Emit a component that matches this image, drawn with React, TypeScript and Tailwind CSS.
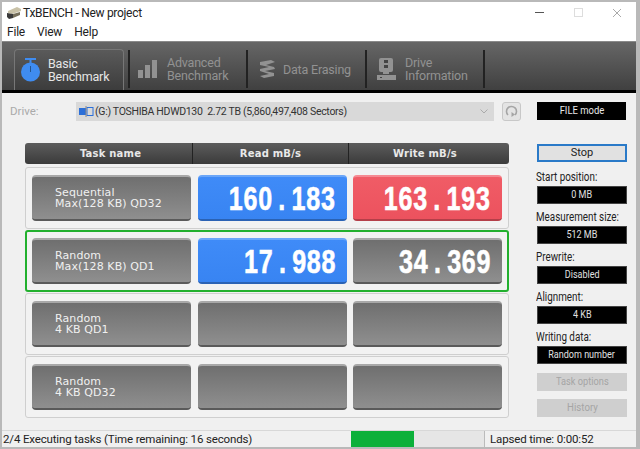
import React from "react";

const sans = "font-['Roboto','Liberation_Sans',sans-serif]";

function Value({ v, tone = "gray", extra = "" }: { v?: string; tone?: "gray" | "blue" | "red"; extra?: string }) {
  const bg =
    tone === "blue"
      ? "bg-[linear-gradient(#3f8bf8,#3884f2)] border-b-[#2a62b4] border-t-[#6ba6f8]"
      : tone === "red"
        ? "bg-[linear-gradient(#f05c66,#ec525e)] border-b-[#b43f49] border-t-[#f58a92]"
        : "bg-[linear-gradient(#6f6f6f,#8f8f8f)] border-b-[#5a5a5a] border-t-[#a8a8a8]";
  return (
    <div className={`h-[46px] rounded-[4px] border-t-2 border-b-2 ${bg} ${extra} flex items-center justify-end pr-[11px]`}>
      {v && (
        <span className="text-white font-['Liberation_Sans',sans-serif] font-bold text-[33px] leading-none tracking-[1px] [word-spacing:-3px] [-webkit-text-stroke:0.6px_white] scale-x-[0.76] origin-right whitespace-pre">
          {v}
        </span>
      )}
    </div>
  );
}

function Row({ a, b, read, write, rt, wt, active }: { a: string; b: string; read?: string; write?: string; rt?: "blue"; wt?: "red"; active?: boolean }) {
  return (
    <div
      className={`h-[62px] rounded-[3px] ${active ? "border-[#22b02e] border-[2px] px-[5px]" : "border border-[#cfcfcf] px-[6px]"} grid grid-cols-[159px_149px_148px] gap-x-[7px] items-center bg-[#f2f2f2]`}
    >
      <div className="h-[46px] rounded-[4px] border-t-2 border-b-2 border-t-[#a8a8a8] border-b-[#5a5a5a] bg-[linear-gradient(#6f6f6f,#8f8f8f)] pl-[23px] flex flex-col justify-center">
        <div className="text-[#f0f0f0] font-['DejaVu_Sans',sans-serif] text-[11px] leading-[11px] tracking-[0.1px]">{a}</div>
        <div className="text-[#f0f0f0] font-['DejaVu_Sans',sans-serif] text-[11px] leading-[11px] tracking-[0.1px]">{b}</div>
      </div>
      <Value v={read} tone={rt ?? "gray"} />
      <Value v={write} tone={wt ?? "gray"} extra="-ml-[1px]" />
    </div>
  );
}

function Tab({ icon, l1, l2, w }: { icon: React.ReactNode; l1: string; l2?: string; w: string }) {
  return (
    <div className={`${w} h-full flex items-center gap-[9px] pl-[8px] pb-[1px]`}>
      {icon}
      <div className="text-[12.5px] tracking-[-0.2px] leading-[13px] text-[#929292]">
        <div>{l1}</div>
        {l2 && <div>{l2}</div>}
      </div>
    </div>
  );
}

function Narrow({ children, s = "scale-x-[0.82]" }: { children: React.ReactNode; s?: string }) {
  return <span className={`inline-block whitespace-nowrap ${s}`}>{children}</span>;
}

function Info({ label, value }: { label: string; value: string }) {
  return (
    <div>
      <div className="text-[12px] leading-[16px] h-[22px] pt-[5px] text-[#222] -ml-[1px] whitespace-nowrap scale-x-[0.82] origin-left">{label}</div>
      <div className="h-[18px] bg-black border border-[#444] text-[#e0e0e0] text-[11px] leading-[16px] flex justify-center overflow-hidden">
        <Narrow>{value}</Narrow>
      </div>
    </div>
  );
}

export default function App() {
  return (
    <div className={`w-[640px] h-[449px] overflow-hidden bg-[#b9b9b9] pt-[2px] pl-[2px] pr-[4px] ${sans}`}>
      <div className="h-[445px] bg-[#f0f0f0] flex flex-col overflow-hidden">
        {/* title */}
        <div className="h-[21px] bg-white flex items-center relative shrink-0">
          <svg width="16" height="14" viewBox="0 0 16 14" className="ml-[4px]">
            <path d="M2 5 L11 1 L15 3 L15 5 L6 8 L2 7Z" fill="#c9c2a8" />
            <path d="M1 7 L7 8 L7 12 L3 13 L1 11Z" fill="#3a3a3a" />
            <path d="M7 8 L14 6 L14 9 L7 12Z" fill="#77705c" />
          </svg>
          <span className="ml-[1px] text-[12px] tracking-[-0.3px] leading-none text-[#222]">TxBENCH - New project</span>
          <div className="ml-auto flex items-center text-[#777]">
            <div className="w-[9px] h-[1px] bg-[#555] mr-[30px]" />
            <div className="w-[9px] h-[9px] border border-[#ddd] mr-[29px]" />
            <svg width="10" height="10" viewBox="0 0 10 10" className="mr-[14px]">
              <path d="M1 1 L9 9 M9 1 L1 9" stroke="#aaa" strokeWidth="1" />
            </svg>
          </div>
        </div>
        {/* menu */}
        <div className="h-[18px] bg-white flex items-center gap-[12px] pl-[5px] text-[12px] tracking-[-0.2px] text-[#222] shrink-0">
          <span>File</span>
          <span>View</span>
          <span>Help</span>
        </div>
        {/* toolbar */}
        <div className="h-[52px] shrink-0 border-t border-[#8a8a8a] border-b-[3px] border-b-black bg-[linear-gradient(#666666,#404040)] flex items-stretch pl-[12px] pt-[7px]">
          <div className="w-[110px] h-[41px] rounded-t-[4px] bg-[linear-gradient(#5a5a5a,#3c3c3c)] border-t border-x border-[#777] flex items-center pl-[6px] gap-[8px]">
            <svg width="19" height="24" viewBox="0 0 19 24">
              <rect x="4" y="0" width="11" height="2" fill="#3f8cf0" />
              <rect x="8.5" y="2" width="2" height="3" fill="#3f8cf0" />
              <circle cx="9.5" cy="14" r="9.5" fill="#3f8cf0" />
              <rect x="9" y="8" width="1" height="6" fill="#24568f" />
            </svg>
            <div className="text-[12.5px] tracking-[-0.2px] leading-[13px] text-[#e6e6e6]">
              <div>Basic</div>
              <div>Benchmark</div>
            </div>
          </div>
          <div className="w-[2px] h-[38px] bg-[#222] ml-[4px] mt-[1px]" />
          <Tab
            w="w-[116px]"
            l1="Advanced"
            l2="Benchmark"
            icon={
              <svg width="20" height="20" viewBox="0 0 20 20">
                <rect x="0" y="11" width="5" height="8" fill="#929292" />
                <rect x="7" y="6" width="5" height="13" fill="#929292" />
                <rect x="14" y="1" width="5" height="18" fill="#929292" />
              </svg>
            }
          />
          <div className="w-[2px] h-[38px] bg-[#222] mt-[1px]" />
          <Tab
            w="w-[117px]"
            l1="Data Erasing"
            icon={
              <svg width="17" height="20" viewBox="0 0 17 20" className="-mr-[2px] ml-[3px]">
                <path d="M1 3 L12 1 L16 3 L7 6 L15 8 L16 10 L6 12 L15 14 L15 17 L5 19 L1 17 L10 15 L1 12 L1 10 L10 8 L1 6Z" fill="#929292" />
              </svg>
            }
          />
          <div className="w-[2px] h-[38px] bg-[#222] mt-[1px]" />
          <Tab
            w="w-[116px]"
            l1="Drive"
            l2="Information"
            icon={
              <svg width="19" height="22" viewBox="0 0 19 22" className="ml-[2px]">
                <rect x="2" y="0" width="14" height="14" rx="2" fill="#929292" />
                <rect x="7" y="2" width="4" height="3" fill="#444" />
                <rect x="7" y="7" width="4" height="3" fill="#444" />
                <rect x="6" y="13" width="6" height="3" fill="#929292" />
                <rect x="0" y="17" width="19" height="5" fill="#929292" />
                <rect x="3" y="19" width="2" height="1" fill="#444" />
              </svg>
            }
          />
          <div className="w-[2px] h-[38px] bg-[#222] mt-[1px]" />
        </div>
        {/* body */}
        <div className="flex-1 flex flex-col min-h-0">
          <div className="h-[40px] shrink-0 flex items-start pt-[9px] pl-[8px]">
            <span className="w-[66px] text-[11.5px] leading-[19px] text-[#aaa]">Drive:</span>
            <div className="w-[418px] h-[19px] bg-[#d9d9d9] flex items-center pl-[2px] text-[10.5px] tracking-[-0.3px] text-[#333] relative whitespace-nowrap">
              <svg width="16" height="13" viewBox="0 0 16 13" className="mr-[1px]">
                <rect x="1" y="3" width="7" height="7" fill="#2c6fd8" />
                <rect x="9" y="2.5" width="6" height="8" fill="none" stroke="#2c6fd8" strokeWidth="1" />
                <path d="M8 1 V12" stroke="#888" />
              </svg>
              (G:) TOSHIBA HDWD130&nbsp;&nbsp;2.72 TB (5,860,497,408 Sectors)
              <svg width="8" height="5" viewBox="0 0 8 5" className="absolute right-[6px] top-[7px]">
                <path d="M0.5 0.5 L4 4 L7.5 0.5" fill="none" stroke="#aaa" />
              </svg>
            </div>
            <div className="ml-[8px] w-[19px] h-[19px] rounded-[3px] border border-[#c8c8c8] bg-[#e4e4e4] flex items-center justify-center">
              <svg width="13" height="13" viewBox="0 0 13 13">
                <path d="M3 10 A5 5 0 1 1 10 10" fill="none" stroke="#a5a5a5" strokeWidth="1.6" />
                <path d="M6.5 7 L6.5 12 L10 9.5Z" fill="#a5a5a5" />
              </svg>
            </div>
            <div className="ml-[16px] w-[89px] h-[18px] bg-black text-[#e8e8e8] text-[11px] leading-[18px] flex justify-center">
              <Narrow s="scale-x-[0.86]">FILE mode</Narrow>
            </div>
          </div>
          <div className="flex flex-1 min-h-0 pt-[10px]">
            {/* table */}
            <div className="ml-[23px] w-[484px] flex flex-col">
              <div className="h-[21px] rounded-[3px] bg-[linear-gradient(#5c5c5c,#3b3b3b)] grid grid-cols-[168px_156px_1fr] text-[#e8e8e8] text-[10px] font-['DejaVu_Sans',sans-serif] font-bold tracking-[0.2px] leading-[21px] text-center">
                <div className="border-r border-[#222] pl-[4px]">Task name</div>
                <div className="border-r border-[#222]">Read mB/s</div>
                <div className="pr-[8px]">Write mB/s</div>
              </div>
              <div className="mt-[3px] flex flex-col gap-[1px]">
                <Row a="Sequential" b="Max(128 KB) QD32" read="160 . 183" write="163 . 193" rt="blue" wt="red" />
                <Row a="Random" b="Max(128 KB) QD1" read="17 . 988" write="34 . 369" rt="blue" active />
                <Row a="Random" b="4 KB QD1" />
                <Row a="Random" b="4 KB QD32" />
              </div>
            </div>
            {/* side */}
            <div className="ml-[28px] w-[90px] flex flex-col pt-[1px]">
              <div className="h-[18px] border-2 border-[#2a7ac8] bg-[#e1e1e1] text-[11px] leading-[14px] text-center text-[#222]">Stop</div>
              <div className="mt-[2px] flex flex-col">
                <Info label="Start position:" value="0 MB" />
                <Info label="Measurement size:" value="512 MB" />
                <Info label="Prewrite:" value="Disabled" />
                <Info label="Alignment:" value="4 KB" />
                <Info label="Writing data:" value="Random number" />
              </div>
              <div className="mt-[9px] h-[18px] bg-[#cfcfcf] text-[#a5a5a5] text-[11px] leading-[18px] flex justify-center">
                <Narrow s="scale-x-[0.84]">Task options</Narrow>
              </div>
              <div className="mt-[8px] h-[18px] bg-[#cfcfcf] text-[#a5a5a5] text-[11px] leading-[18px] flex justify-center">
                <Narrow s="scale-x-[0.88]">History</Narrow>
              </div>
            </div>
          </div>
        </div>
        {/* status */}
        <div className="h-[17px] shrink-0 flex items-stretch border-t border-[#d8d8d8] text-[11.5px] tracking-[-0.15px] leading-[17px] text-[#222]">
          <div className="w-[349px] pl-[1px] whitespace-nowrap">2/4 Executing tasks (Time remaining: 16 seconds)</div>
          <div className="w-[134px] bg-[#e6e6e6] border-r border-[#bbb]">
            <div className="w-[63px] h-full bg-[#0cb03a]" />
          </div>
          <div className="pl-[5px] whitespace-nowrap">Lapsed time: 0:00:52</div>
        </div>
      </div>
    </div>
  );
}
